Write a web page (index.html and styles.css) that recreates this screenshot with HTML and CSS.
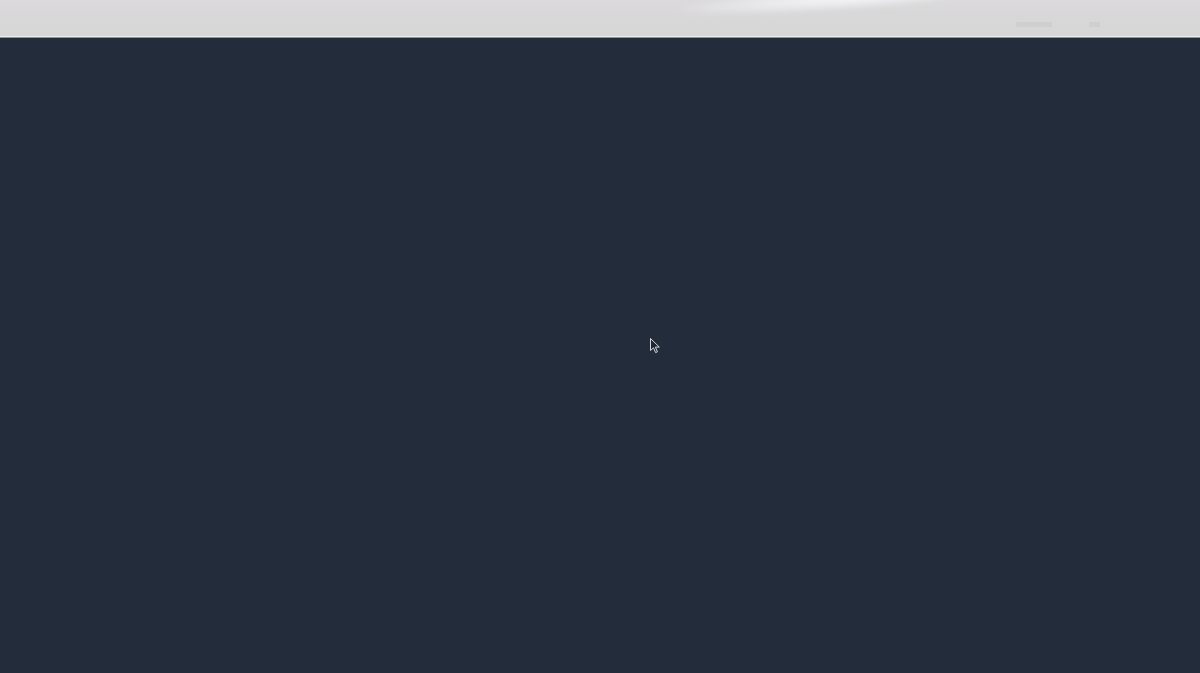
FILE: index.html
```html
<!DOCTYPE html>
<html lang="en">
<head>
<meta charset="utf-8">
<title>Loading</title>
<link rel="stylesheet" href="styles.css">
</head>
<body>
<header class="topbar">
  <div class="glare"></div>
  <div class="ghosts">
    <span class="ghost wide"></span>
    <span class="ghost small"></span>
  </div>
</header>
<main class="stage">
  <svg class="cursor" width="11" height="16" viewBox="0 0 11 16" aria-hidden="true">
    <path d="M0.5 0.5 L0.5 12.5 L3.5 9.8 L5.6 14.6 L7.4 13.8 L5.4 9.1 L9.3 9.1 Z" fill="#1f2736" stroke="#d4d7dd" stroke-width="1"/>
  </svg>
</main>
</body>
</html>
```

FILE: styles.css
```css
html, body {
  margin: 0;
  padding: 0;
  height: 100%;
  background: #232c3b;
  font-family: "Liberation Sans", Arial, sans-serif;
  overflow: hidden;
}

.topbar {
  position: relative;
  height: 36px;
  background: linear-gradient(to bottom, #dcdadc 0px, #d9d8d9 12px, #d6d6d6 36px);
  border-bottom: 1px solid #ececec;
  box-shadow: 0 1px 0 #8c9099;
  overflow: hidden;
}

.glare {
  position: absolute;
  left: 670px;
  top: -10px;
  width: 300px;
  height: 22px;
  border-radius: 50%;
  background: radial-gradient(ellipse at 62% 45%, rgba(248, 248, 250, 0.95) 0%, rgba(240, 240, 242, 0.6) 40%, rgba(230, 230, 232, 0) 72%);
  transform: rotate(-4deg);
  filter: blur(2px);
}

.ghosts {
  position: absolute;
  right: 100px;
  top: 22px;
  display: flex;
  gap: 37px;
}

.ghost {
  display: block;
  height: 5px;
  background: rgba(200, 200, 200, 0.5);
}

.ghost.wide { width: 36px; }
.ghost.small { width: 11px; }

.stage {
  position: relative;
  height: calc(100% - 38px);
  margin-top: 1px;
}

.cursor {
  position: absolute;
  left: 650px;
  top: 300px;
}
```
